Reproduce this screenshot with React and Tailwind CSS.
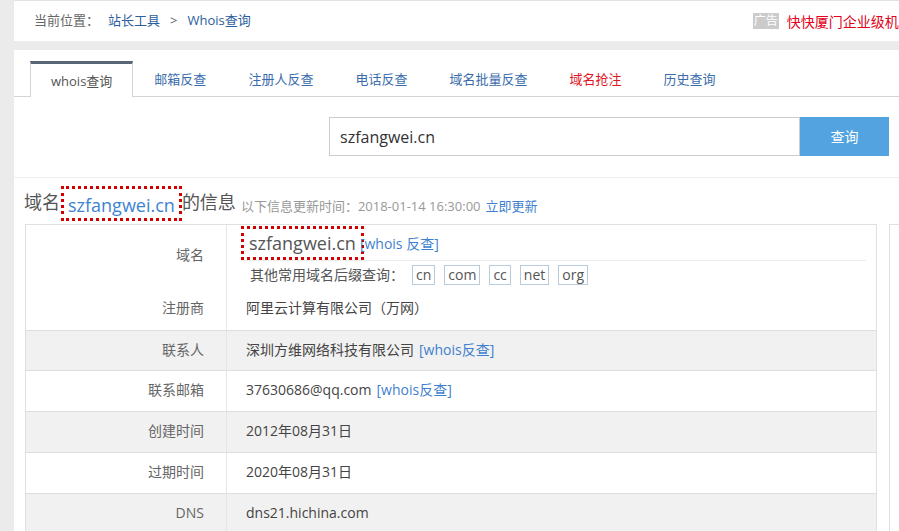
import React from 'react';

const tabs = [
  { name: 'whois查询', active: true },
  { name: '邮箱反查' },
  { name: '注册人反查' },
  { name: '电话反查' },
  { name: '域名批量反查' },
  { name: '域名抢注', red: true },
  { name: '历史查询' },
];

const rows = [
  { label: '联系人', value: '深圳方维网络科技有限公司', link: '[whois反查]', gray: true, h: 'h-[40px]' },
  { label: '联系邮箱', value: '37630686@qq.com', link: '[whois反查]', h: 'h-[41px]' },
  { label: '创建时间', value: '2012年08月31日', gray: true, h: 'h-[41px]' },
  { label: '过期时间', value: '2020年08月31日', h: 'h-[41px]' },
  { label: 'DNS', value: 'dns21.hichina.com', gray: true, h: 'h-[41px]' },
];

const suffixes = ['cn', 'com', 'cc', 'net', 'org'];

export default function App() {
  return (
    <div className="h-[531px] w-full overflow-hidden bg-[#ebebeb] font-['Open_Sans','Noto_Sans_CJK_SC',sans-serif]">
      <div className="ml-[14px] w-[1200px]">
        {/* breadcrumb */}
        <div className="flex h-[41px] items-center border-t border-[#e2e2e2] bg-white px-[20px] text-[13px]">
          <span className="text-[#666]">当前位置：</span>
          <a className="ml-[9px] text-[#2c5d9c]">站长工具</a>
          <span className="ml-[10px] text-[#666]">&gt;</span>
          <a className="ml-[10px] text-[#2c5d9c]">Whois查询</a>
          <div className="ml-[502px] flex items-center whitespace-nowrap">
            <span className="bg-[#cbcbcb] px-[1px] text-[12px] leading-[16px] text-white">广告</span>
            <span className="ml-[8px] text-[14px] text-[#e2001a]">快快厦门企业级机房</span>
          </div>
        </div>

        <div className="mt-[9px] bg-white pt-[11px]">
          {/* tabs */}
          <div className="flex h-[36px] border-b border-[#d5d5d5] pl-[16px] text-[13px]">
            {tabs.map((t) =>
              t.active ? (
                <div
                  key={t.name}
                  className="-mb-px flex h-[36px] items-center border-x border-t-[3px] border-x-[#d5d5d5] border-t-[#5b6578] bg-white px-[20px] pt-[2px] text-[#555]"
                >
                  {t.name}
                </div>
              ) : (
                <div
                  key={t.name}
                  className={`flex items-center px-[21px] pt-[3px] ${t.red ? 'text-[#e0151f]' : 'text-[#3a6cab]'}`}
                >
                  {t.name}
                </div>
              )
            )}
          </div>

          {/* search */}
          <div className="flex border-b border-[#eeeeee] pb-[21px] pl-[315px] pt-[20px]">
            <div className="flex h-[39px] w-[471px] items-center border border-[#cccccc] pl-[10px] text-[16px] text-[#333]">
              szfangwei.cn
            </div>
            <button className="h-[39px] w-[89px] bg-[#52a3e0] text-[14px] text-white">查询</button>
          </div>

          {/* heading */}
          <div className="flex h-[46px] items-start pl-[10px] pt-[8px] text-[#555]">
            <span className="pt-[3px] text-[18px]">域名</span>
            <span className="ml-px flex h-[35px] items-center border-[3px] border-dotted border-[#d40000] px-[4px] pt-[3px] text-[18px] text-[#3c84d2]">
              szfangwei.cn
            </span>
            <span className="pt-[3px] text-[18px]">的信息</span>
            <span className="ml-[5px] mt-[11px] text-[13px] text-[#999]">以下信息更新时间：2018-01-14 16:30:00</span>
            <a className="ml-[5px] mt-[11px] text-[13px] text-[#3f7fcf]">立即更新</a>
          </div>

          {/* table + sidebar */}
          <div className="flex pl-[11px]">
            <div className="w-[852px] border border-[#e0e0e0] text-[14px]">
              <div className="flex h-[62px]">
                <div className="flex w-[201px] items-center justify-end border-r border-[#e6e6e6] pb-[4px] pr-[22px] text-[#666]">
                  域名
                </div>
                <div className="flex-1 pl-[14px] pr-[10px] pt-[1px]">
                  <div className="flex items-center border-b border-[#ececec]">
                    <span className="flex h-[34px] items-center border-[3px] border-dotted border-[#d40000] px-[5px] text-[18px] text-[#555]">
                      szfangwei.cn
                    </span>
                    <a className="-ml-[4px] text-[#3f7fcf]">[whois 反查]</a>
                  </div>
                  <div className="mt-[3px] flex items-center pl-[9px] text-[#555]">
                    <span>其他常用域名后缀查询：</span>
                    <div className="ml-[8px] flex gap-[9px]">
                      {suffixes.map((s) => (
                        <span key={s} className="flex h-[20px] items-center border border-[#b7cbdd] px-[3px] leading-none">
                          {s}
                        </span>
                      ))}
                    </div>
                  </div>
                </div>
              </div>
              <div className="flex h-[43px]">
                <div className="flex w-[201px] items-center justify-end border-r border-[#e6e6e6] pb-[3px] pr-[22px] text-[#666]">
                  注册商
                </div>
                <div className="flex items-center pb-[3px] pl-[19px] text-[#444]">阿里云计算有限公司（万网）</div>
              </div>
              {rows.map((r) => (
                <div key={r.label} className={`flex ${r.h} border-t border-[#dedede] ${r.gray ? 'bg-[#f1f1f1]' : 'bg-white'}`}>
                  <div className="flex w-[201px] items-center justify-end border-r border-[#e6e6e6] pb-[3px] pr-[22px] text-[#666]">
                    {r.label}
                  </div>
                  <div className="flex items-center pb-[3px] pl-[19px] text-[#444]">
                    {r.value}
                    {r.link && <a className="ml-[5px] text-[#3f7fcf]">{r.link}</a>}
                  </div>
                </div>
              ))}
            </div>
            <div className="ml-[12px] h-[320px] w-[300px] border-l border-t border-[#e0e0e0]"></div>
          </div>
        </div>
      </div>
    </div>
  );
}
